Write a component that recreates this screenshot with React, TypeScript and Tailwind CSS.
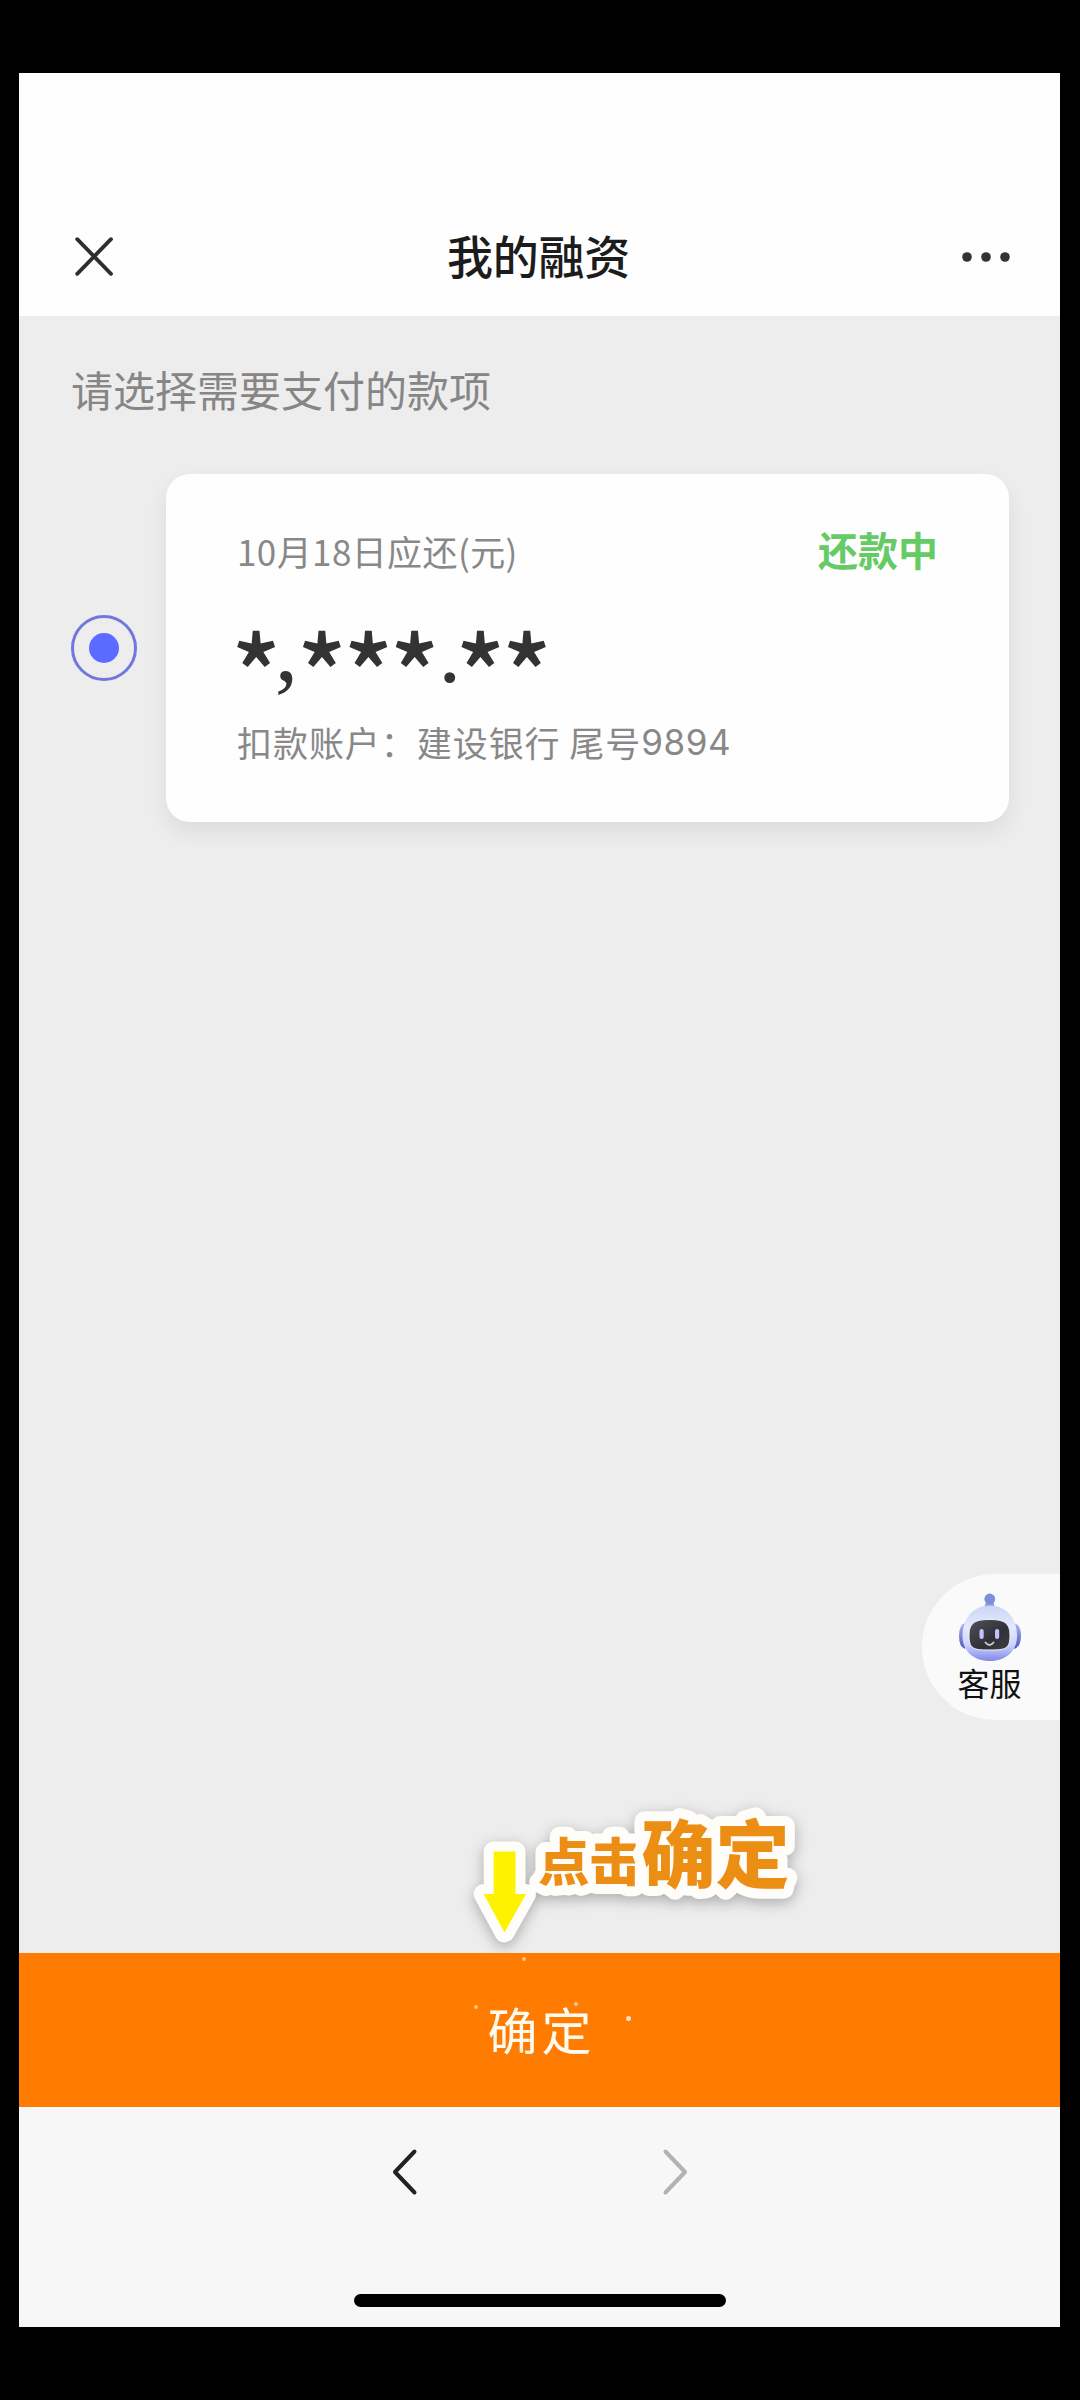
import React from "react";

function CloseIcon() {
  return (
    <svg className="h-[42px] w-[42px]" viewBox="0 0 42 42" fill="none" stroke="#2e2e2e" strokeWidth="3.8" strokeLinecap="round">
      <path d="M4.2 3.2 L38 37.8 M38 3.2 L4.2 37.8" />
    </svg>
  );
}

function MoreIcon() {
  return (
    <svg className="h-[10px] w-[48px]" viewBox="0 0 48 10" fill="#333">
      <circle cx="5" cy="5" r="4.8" />
      <circle cx="24" cy="5" r="4.8" />
      <circle cx="43" cy="5" r="4.8" />
    </svg>
  );
}

function Robot() {
  return (
    <svg className="h-[70px] w-[66px]" viewBox="0 0 66 70">
      <defs>
        <linearGradient id="head" x1="0" y1="0" x2="0" y2="1">
          <stop offset="0" stopColor="#cbd6f6" />
          <stop offset="0.4" stopColor="#e4e9fd" />
          <stop offset="0.7" stopColor="#ced5fb" />
          <stop offset="1" stopColor="#8088e8" />
        </linearGradient>
        <linearGradient id="ear" x1="0" y1="0" x2="0" y2="1">
          <stop offset="0" stopColor="#a9b4ee" />
          <stop offset="1" stopColor="#5259c4" />
        </linearGradient>
        <linearGradient id="face" x1="0" y1="0" x2="1" y2="1">
          <stop offset="0" stopColor="#50525a" />
          <stop offset="0.6" stopColor="#303136" />
          <stop offset="1" stopColor="#3e3f46" />
        </linearGradient>
      </defs>
      <path d="M8 31 Q2 33 2 44 Q2 55 8 57 Z" fill="url(#ear)" />
      <path d="M57 31 Q64 33 64 44 Q64 55 57 57 Z" fill="url(#ear)" />
      <path d="M29.500 9 H36 L38.500 17 Q33 19 26.500 17 Z" fill="#8e9ce2" />
      <circle cx="32.800" cy="7" r="5.400" fill="#7d8edb" />
      <path d="M32.800 13.500 C49 13.500 60 26 60 44 C60 59 49 69 32.800 69 C16.500 69 5.500 59 5.500 44 C5.500 26 16.500 13.500 32.800 13.500 Z" fill="url(#head)" />
      <path d="M32.500 27.500 C46 27.500 53 30 53 43 C53 57 49 58 32.500 58 C16 58 12 57 12 43 C12 30 19 27.500 32.500 27.500 Z" fill="url(#face)" stroke="#f1f3ff" strokeWidth="1" />
      <rect x="22.500" y="37" width="4.200" height="10" rx="2.100" fill="#bcc4fb" />
      <rect x="38" y="37" width="4.200" height="10" rx="2.100" fill="#bcc4fb" />
      <path d="M28.500 50.500 Q32.500 55.500 36.500 50.500" fill="none" stroke="#c3c5d6" strokeWidth="2" strokeLinecap="round" />
    </svg>
  );
}

function Star() {
  return <span className="flex w-[46.4px] justify-center">*</span>;
}

/* Sticker hint: down arrow plus outlined caption, above the confirm button */
function Hint() {
  return (
    <svg
      className="absolute top-[1464px] left-[441px] h-[170px] w-[360px] drop-shadow-[0_4px_7px_rgba(0,0,0,0.28)]"
      viewBox="460 1780 360 170"
      overflow="visible"
      stroke="#fffdf9"
      strokeWidth="20"
      strokeLinejoin="round"
      paintOrder="stroke"
    >
      <path d="M493.700 1851.500 H515.500 V1894 H526 L504.500 1932.500 L483.700 1894 H493.700 Z" fill="#fff200" />
      <g className="font-black" fill="#ed8e14">
        <text x="538" y="1881" fontSize="51.500">点击</text>
        <text x="641.500" y="1882" fontSize="74">确定</text>
      </g>
    </svg>
  );
}

const sparks = [
  "absolute top-[4px] left-[503px] h-[4px] w-[4px] rounded-full bg-[#ffc285]",
  "absolute top-[52px] left-[455px] h-[4px] w-[4px] rounded-full bg-[#ffc285]",
  "absolute top-[49px] left-[555px] h-[4px] w-[4px] rounded-full bg-[#ffc285]",
  "absolute top-[63px] left-[607px] h-[5px] w-[5px] rounded-full bg-[#ffe3c2]",
];

export default function App() {
  return (
    <div className="flex h-[2400px] w-[1080px] flex-col bg-black pt-[73px] pr-[20px] pb-[73px] pl-[19px] font-['Noto_Sans_CJK_SC',sans-serif]">
      <div className="flex flex-1 flex-col bg-[#ededed]">
        <header className="flex h-[243px] items-center justify-between bg-[#fefefe] pt-[125px] pr-[50px] pl-[54px]">
          <CloseIcon />
          <h1 className="mb-[7px] text-[46px] leading-[60px] font-medium tracking-[-0.3px] whitespace-nowrap text-[#1c1c1c]">我的融资</h1>
          <MoreIcon />
        </header>

        <main className="relative flex h-[1637px] flex-col">
          <p className="mt-[43px] ml-[52px] text-[42px] leading-[60px] text-[#868686]">请选择需要支付的款项</p>
          <div className="mt-[55px] flex items-center pl-[52px]">
            <div className="flex h-[66px] w-[66px] items-center justify-center rounded-full border-[3px] border-[#7078dc]">
              <div className="h-[30px] w-[30px] rounded-full bg-[#5a6bff]" />
            </div>
            <section className="ml-[29px] h-[348px] w-[843px] rounded-[24px] bg-[#fefefe] px-[71px] pt-[47px] shadow-[0_10px_22px_rgba(0,0,0,0.07)]">
              <div className="flex h-[60px] items-center justify-between">
                <span className="text-[35px] leading-[60px] tracking-[0.4px] text-[#888]">10月18日应还(元)</span>
                <span className="mb-[5px] text-[40px] leading-[60px] font-bold text-[#66cb66]">还款中</span>
              </div>
              <div className="mt-[44px] -ml-[4px] flex h-[88px] text-[103px] leading-[88px] font-medium text-[#333]">
                <Star />
                <span className="-mt-[20px] flex w-[19.4px] justify-center pr-[5px] text-[94px] font-normal font-['Liberation_Serif',serif]">,</span>
                <Star />
                <Star />
                <Star />
                <span className="-mt-[18px] flex w-[19.4px] justify-center pl-[4px] text-[92px] font-normal font-['Liberation_Serif',serif]">.</span>
                <Star />
                <Star />
              </div>
              <div className="-mt-px flex h-[60px] text-[35px] leading-[60px] tracking-[0.95px] whitespace-pre text-[#888]">
                <span>扣款账户：建设银行 尾号</span>
                <span className="font-['Inter',sans-serif] tracking-[0.6px]">9894</span>
              </div>
            </section>
          </div>

          <aside className="absolute top-[1258px] right-0 flex h-[146px] w-[138px] flex-col items-center rounded-l-full bg-[#fafafa] pt-[18px] pr-[3px]">
            <Robot />
            <span className="-mt-[2px] text-[32px] leading-[44px] text-[#111]">客服</span>
          </aside>

          <Hint />
        </main>

        <button className="relative flex h-[154px] items-center justify-center bg-[#ff7c00] pb-[4px] pl-[4px] text-[50px] leading-[60px] tracking-[4px] text-[#fffaf0]">
          确定
          {sparks.map((s) => (
            <span key={s} className={s} />
          ))}
        </button>

        <nav className="flex flex-1 flex-col items-center bg-[#f7f7f7] pt-[40px]">
          <div className="flex w-[296px] justify-between">
            <svg className="h-[50px] w-[26px]" viewBox="0 0 26 50" fill="none" stroke="#222" strokeWidth="4" strokeLinecap="round" strokeLinejoin="round">
              <path d="M22.500 4.500 L3 25 L22.500 45.500" />
            </svg>
            <svg className="h-[50px] w-[26px]" viewBox="0 0 26 50" fill="none" stroke="#b2b2b2" strokeWidth="4" strokeLinecap="round" strokeLinejoin="round">
              <path d="M3.500 4.500 L23 25 L3.500 45.500" />
            </svg>
          </div>
          <div className="mt-[97px] ml-px h-[13px] w-[372px] rounded-full bg-black" />
        </nav>
      </div>
    </div>
  );
}
